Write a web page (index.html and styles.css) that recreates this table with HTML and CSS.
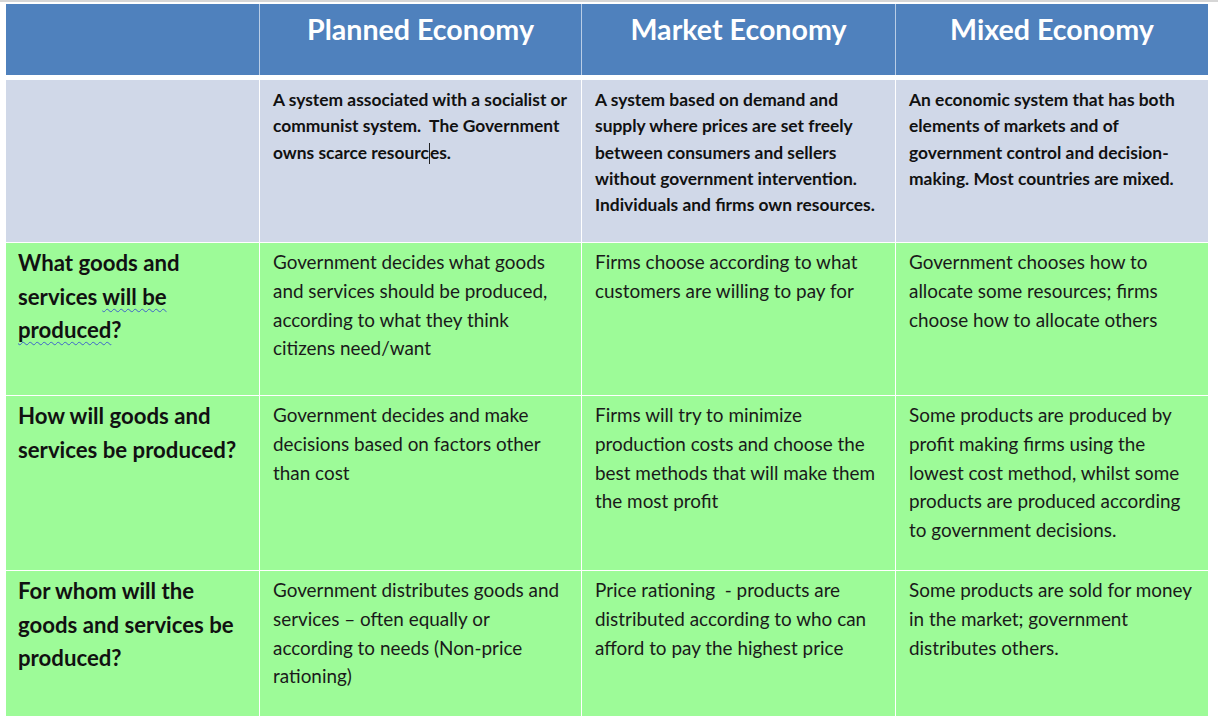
FILE: index.html
```html
<!DOCTYPE html>
<html lang="en">
<head>
<meta charset="utf-8">
<title>Economic Systems</title>
<link rel="stylesheet" href="styles.css">
</head>
<body>
<div class="topline"></div>
<div class="table">
  <div class="row head">
    <div class="cell"></div>
    <div class="cell">Planned Economy</div>
    <div class="cell">Market Economy</div>
    <div class="cell">Mixed Economy</div>
  </div>
  <div class="row desc">
    <div class="cell"></div>
    <div class="cell">A system associated with a socialist or<br>communist system.&nbsp; The Government<br>owns scarce resourc<span class="caret"></span>es.</div>
    <div class="cell">A system based on demand and<br>supply where prices are set freely<br>between consumers and sellers<br>without government intervention.<br>Individuals and firms own resources.</div>
    <div class="cell">An economic system that has both<br>elements of markets and of<br>government control and decision-<br>making. Most countries are mixed.</div>
  </div>
  <div class="row green r1">
    <div class="cell q">What goods and<br>services <span class="spell">will be </span><br><span class="spell">produced</span>?</div>
    <div class="cell">Government decides what goods<br>and services should be produced,<br>according to what they think<br>citizens need/want</div>
    <div class="cell">Firms choose according to what<br>customers are willing to pay for</div>
    <div class="cell">Government chooses how to<br>allocate some resources; firms<br>choose how to allocate others</div>
  </div>
  <div class="row green r2">
    <div class="cell q">How will goods and<br>services be produced?</div>
    <div class="cell">Government decides and make<br>decisions based on factors other<br>than cost</div>
    <div class="cell">Firms will try to minimize<br>production costs and choose the<br>best methods that will make them<br>the most profit</div>
    <div class="cell">Some products are produced by<br>profit making firms using the<br>lowest cost method, whilst some<br>products are produced according<br>to government decisions.</div>
  </div>
  <div class="row green r3">
    <div class="cell q">For whom will the<br>goods and services be<br>produced?</div>
    <div class="cell">Government distributes goods and<br>services – often equally or<br>according to needs (Non-price<br>rationing)</div>
    <div class="cell">Price rationing&nbsp; - products are<br>distributed according to who can<br>afford to pay the highest price</div>
    <div class="cell">Some products are sold for money<br>in the market; government<br>distributes others.</div>
  </div>
</div>
</body>
</html>
```
FILE: styles.css
```css
html, body {
  margin: 0;
  padding: 0;
  background: #ffffff;
}
body {
  width: 1218px;
  height: 724px;
  overflow: hidden;
  font-family: "Lato", "Open Sans", "Liberation Sans", sans-serif;
  color: #111;
}
.topline {
  height: 2px;
  background: #d6d6d6;
  margin-bottom: 2px;
}
.table {
  margin-left: 6px;
  width: 1202px;
  display: flex;
  flex-direction: column;
  gap: 1px;
}
.row {
  display: grid;
  grid-template-columns: 253px 321px 313px 312px;
  column-gap: 1px;
}
.cell {
  white-space: nowrap;
}
.head {
  height: 71px;
  margin-bottom: 4px;
  background: #b9cde6;
}
.head .cell {
  background: #4f81bd;
  color: #ffffff;
  font-weight: 700;
  font-size: 28.6px;
  line-height: 34px;
  text-align: center;
  padding-top: 8px;
}
.desc {
  height: 162px;
  background: #ffffff;
}
.desc .cell {
  background: #d0d8e8;
  font-weight: 700;
  font-size: 17.4px;
  line-height: 26.3px;
  padding: 7px 4px 0 13px;
}
.green .cell {
  background: #9dfb98;
  font-size: 18.9px;
  line-height: 28.8px;
  padding: 5px 4px 0 13px;
  color: #1a1a1a;
}
.green .cell.q {
  font-weight: 700;
  font-size: 22.2px;
  line-height: 33.7px;
  padding: 3px 4px 0 12px;
  color: #111;
}
.r1 { height: 152px; }
.r2 { height: 174px; }
.r3 { height: 145px; }
.spell {
  text-decoration: underline wavy #3d63c9;
  text-decoration-thickness: 1px;
  text-underline-offset: 3px;
}
.caret {
  display: inline-block;
  width: 1px;
  height: 21px;
  background: #222;
  vertical-align: -5px;
}
```
